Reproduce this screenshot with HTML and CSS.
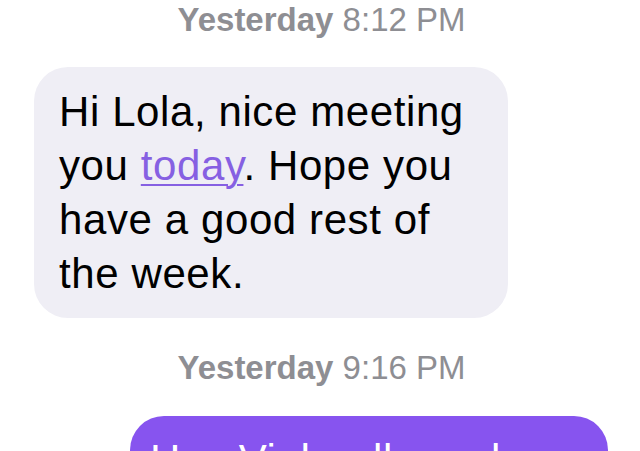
FILE: index.html
```html
<!DOCTYPE html>
<html lang="en">
<head>
  <meta charset="UTF-8">
  <meta name="viewport" content="width=device-width, initial-scale=1.0">
  <title>Messages</title>
  <link rel="stylesheet" href="styles.css">
</head>
<body>
  <div class="thread">
    <div class="stamp"><strong>Yesterday</strong> 8:12 PM</div>

    <div class="bubble recu">
      Hi Lola, nice meeting you <a href="#" class="lien">today</a>. Hope you have a good rest of the week.
    </div>

    <div class="stamp second"><strong>Yesterday</strong> 9:16 PM</div>

    <div class="bubble envoye">
      Hey Vinh, all good here. Thanks again for the coffee, it was lovely to meet you too!
    </div>
  </div>
</body>
</html>
```

FILE: styles.css
```css
body {
  margin: 0;
  background: #ffffff;
  font-family: "Liberation Sans", Arial, sans-serif;
}

.thread {
  display: flex;
  flex-direction: column;
  height: 451px;
  overflow: hidden;
}

.stamp {
  text-align: center;
  font-size: 33px;
  line-height: 40px;
  color: #8e8e93;
  padding-left: 3px;
}

.stamp strong {
  font-weight: bold;
}

.stamp.second {
  margin-top: 30px;
}

.bubble {
  font-size: 42px;
  line-height: 54px;
  letter-spacing: 0.6px;
  border-radius: 34px;
  box-sizing: border-box;
}

.recu {
  align-self: flex-start;
  margin-left: 34px;
  margin-top: 27px;
  width: 474px;
  padding: 18px 32px 17px 25px;
  background: #efeef5;
  color: #000000;
}

.lien {
  color: #8660e2;
  text-decoration: underline;
  text-decoration-thickness: 2px;
  text-underline-offset: 4px;
}

.envoye {
  align-self: flex-end;
  margin-right: 32px;
  margin-top: 28px;
  width: 478px;
  padding: 17px 26px 17px 20px;
  background: #8754ef;
  color: #ffffff;
  flex-shrink: 0;
}
```
